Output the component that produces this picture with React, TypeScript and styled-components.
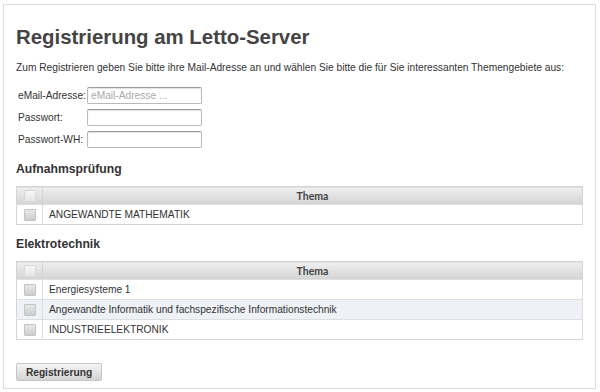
import React from "react";
import styled, { createGlobalStyle } from "styled-components";

const Global = createGlobalStyle`
  html, body { margin: 0; padding: 0; background: #fff; }
  body { font-family: "Liberation Sans", Arial, sans-serif; color: #333; }
`;

const Panel = styled.div`
  box-sizing: border-box;
  margin: 4px 0 0 3px;
  width: 593px;
  height: 385px;
  border: 1px solid #dcdcdc;
  padding: 0 12px 0 12px;
  display: flex;
  flex-direction: column;
`;

const Title = styled.h1`
  margin: 20px 0 0 0;
  font-size: 20.4px;
  line-height: 24px;
  font-weight: bold;
  color: #444;
`;

const Intro = styled.p`
  margin: 12px 0 0 0;
  font-size: 10.2px;
  line-height: 13px;
  color: #333;
`;

const Form = styled.div`
  margin-top: 13px;
  margin-left: 2px;
  display: grid;
  grid-template-columns: 67px 115px;
  justify-content: start;
  row-gap: 5px;
  column-gap: 2px;
  align-items: center;
`;

const Label = styled.label`
  font-size: 10.2px;
  white-space: nowrap;
  color: #333;
`;

const Input = styled.input`
  box-sizing: border-box;
  width: 115px;
  height: 17px;
  margin: 0;
  border: 1px solid #b9b9b9;
  border-top-color: #9c9c9c;
  border-radius: 2px;
  box-shadow: inset 0 1px 1px rgba(0, 0, 0, 0.12);
  font-family: "Liberation Sans", Arial, sans-serif;
  font-size: 10.2px;
  padding: 0 3px;
  &::placeholder { color: #aaa; }
`;

const SectionTitle = styled.h2<{ $gap: number }>`
  margin: ${(p) => p.$gap}px 0 0 0;
  font-size: 12.2px;
  line-height: 15px;
  font-weight: bold;
  color: #333;
`;

const Table = styled.table`
  margin-top: 9px;
  width: 567px;
  border-collapse: collapse;
  border: 1px solid #d4d4d4;
  font-size: 10.2px;
`;

const HeadCell = styled.th<{ $narrow?: boolean }>`
  box-sizing: border-box;
  height: 18px;
  padding: 0;
  width: ${(p) => (p.$narrow ? "26px" : "auto")};
  background: linear-gradient(#efefef, #d3d3d3);
  border-right: 1px solid #d4d4d4;
  font-family: Lato, "Open Sans", sans-serif;
  font-weight: bold;
  font-size: 10.5px;
  color: #444;
  text-align: center;
`;

const Row = styled.tr<{ $alt?: boolean }>`
  background: ${(p) => (p.$alt ? "#eef1f5" : "#fff")};
  border-top: 1px solid #dedede;
`;

const Cell = styled.td<{ $narrow?: boolean }>`
  box-sizing: border-box;
  height: 20px;
  padding: 0 ${(p) => (p.$narrow ? "0" : "6px")};
  width: ${(p) => (p.$narrow ? "26px" : "auto")};
  text-align: ${(p) => (p.$narrow ? "center" : "left")};
  border-right: 1px solid #dedede;
  color: #333;
`;

const Box = styled.span<{ $head?: boolean }>`
  display: block;
  margin: 0 auto;
  box-sizing: border-box;
  width: 12px;
  height: 12px;
  border: 1px solid ${(p) => (p.$head ? "#d8d8d8" : "#c4c4c4")};
  border-radius: 1px;
  background: ${(p) =>
    p.$head ? "linear-gradient(#f6f6f6, #e6e6e6)" : "linear-gradient(#e8e8e8, #cdcdcd)"};
`;

const Button = styled.button`
  margin-top: 23px;
  align-self: flex-start;
  box-sizing: border-box;
  height: 18px;
  width: 86px;
  border: 1px solid #c6c6c6;
  border-radius: 2px;
  background: linear-gradient(#f5f5f5, #d3d3d3);
  font-family: "Liberation Sans", Arial, sans-serif;
  font-weight: bold;
  font-size: 10.2px;
  color: #333;
  padding: 0;
`;

type Sec = { title: string; rows: string[]; gap: number };

const sections: Sec[] = [
  { title: "Aufnahmsprüfung", rows: ["ANGEWANDTE MATHEMATIK"], gap: 14 },
  {
    title: "Elektrotechnik",
    rows: [
      "Energiesysteme 1",
      "Angewandte Informatik und fachspezifische Informationstechnik",
      "INDUSTRIEELEKTRONIK",
    ],
    gap: 12,
  },
];

export default function App() {
  return (
    <>
      <Global />
      <Panel>
        <Title>Registrierung am Letto-Server</Title>
        <Intro>
          Zum Registrieren geben Sie bitte ihre Mail-Adresse an und wählen Sie bitte die für Sie
          interessanten Themengebiete aus:
        </Intro>
        <Form>
          <Label>eMail-Adresse:</Label>
          <Input placeholder="eMail-Adresse ..." />
          <Label>Passwort:</Label>
          <Input type="password" />
          <Label>Passwort-WH:</Label>
          <Input type="password" />
        </Form>
        {sections.map((s) => (
          <React.Fragment key={s.title}>
            <SectionTitle $gap={s.gap}>{s.title}</SectionTitle>
            <Table>
              <thead>
                <tr>
                  <HeadCell $narrow>
                    <Box $head />
                  </HeadCell>
                  <HeadCell>Thema</HeadCell>
                </tr>
              </thead>
              <tbody>
                {s.rows.map((r, i) => (
                  <Row key={r} $alt={i === 1}>
                    <Cell $narrow>
                      <Box />
                    </Cell>
                    <Cell>{r}</Cell>
                  </Row>
                ))}
              </tbody>
            </Table>
          </React.Fragment>
        ))}
        <Button>Registrierung</Button>
      </Panel>
    </>
  );
}
